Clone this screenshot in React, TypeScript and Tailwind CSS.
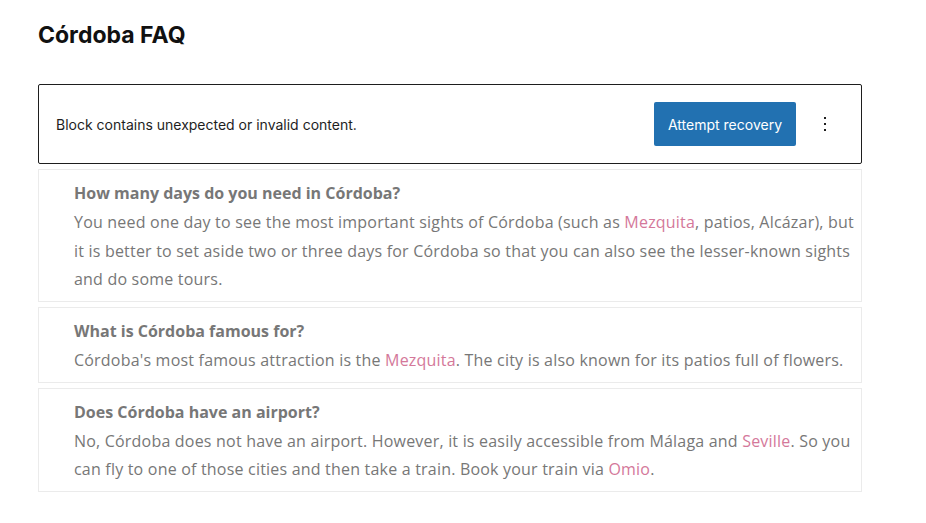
import type { ReactNode } from "react";

const faqs: { q: string; a: ReactNode }[] = [
  {
    q: "How many days do you need in Córdoba?",
    a: (
      <>
        You need one day to see the most important sights of Córdoba (such as{" "}
        <FaqLink>Mezquita</FaqLink>, patios, Alcázar), but it is better to set
        aside two or three days for Córdoba so that you can also see the
        lesser-known sights and do some tours.
      </>
    ),
  },
  {
    q: "What is Córdoba famous for?",
    a: (
      <>
        Córdoba's most famous attraction is the <FaqLink>Mezquita</FaqLink>.
        The city is also known for its patios full of flowers.
      </>
    ),
  },
  {
    q: "Does Córdoba have an airport?",
    a: (
      <>
        No, Córdoba does not have an airport. However, it is easily accessible
        from Málaga and <FaqLink>Seville</FaqLink>. So you can fly to one of
        those cities and then take a train. Book your train via{" "}
        <FaqLink>Omio</FaqLink>.
      </>
    ),
  },
];

function FaqLink({ children }: { children: ReactNode }) {
  return <a className="text-[#d4789a] no-underline">{children}</a>;
}

function MoreVertical() {
  return (
    <svg width="24" height="24" viewBox="0 0 24 24" fill="#1e1e1e" aria-hidden>
      <path d="M13 19h-2v-2h2v2zm0-6h-2v-2h2v2zm0-6h-2V5h2v2z" />
    </svg>
  );
}

export default function App() {
  return (
    <div className="min-h-screen bg-white pl-[38px] pt-[21px]">
      <h2 className="mb-[35px] font-['Inter',sans-serif] text-[23px] font-bold leading-[28px] text-[#111]">
        Córdoba FAQ
      </h2>

      {/* invalid block warning */}
      <div className="flex h-[80px] w-[824px] items-center justify-between rounded-[2px] border border-[#1e1e1e] pl-[17px] pr-[18px] font-['Inter',sans-serif]">
        <p className="text-[14px] text-[#1e1e1e]">
          Block contains unexpected or invalid content.
        </p>
        <div className="flex items-center gap-[11px]">
          <button
            type="button"
            className="h-[44px] w-[142px] rounded-[2px] bg-[#2271b1] text-[14px] text-white"
          >
            Attempt recovery
          </button>
          <button
            type="button"
            className="flex h-[36px] w-[36px] items-center justify-center"
            aria-label="More options"
          >
            <MoreVertical />
          </button>
        </div>
      </div>

      <div className="mt-[5px] flex w-[824px] flex-col gap-[5px] font-['Open_Sans',sans-serif] text-[16px] leading-[28.8px] text-[#777]">
        {faqs.map((f) => (
          <div
            key={f.q}
            className="border border-[#ebebeb] pt-[9px] pb-[7px] pl-[35px] pr-0"
          >
            <h3 className="font-bold">{f.q}</h3>
            <p className="tracking-[0.2px]">{f.a}</p>
          </div>
        ))}
      </div>
    </div>
  );
}
